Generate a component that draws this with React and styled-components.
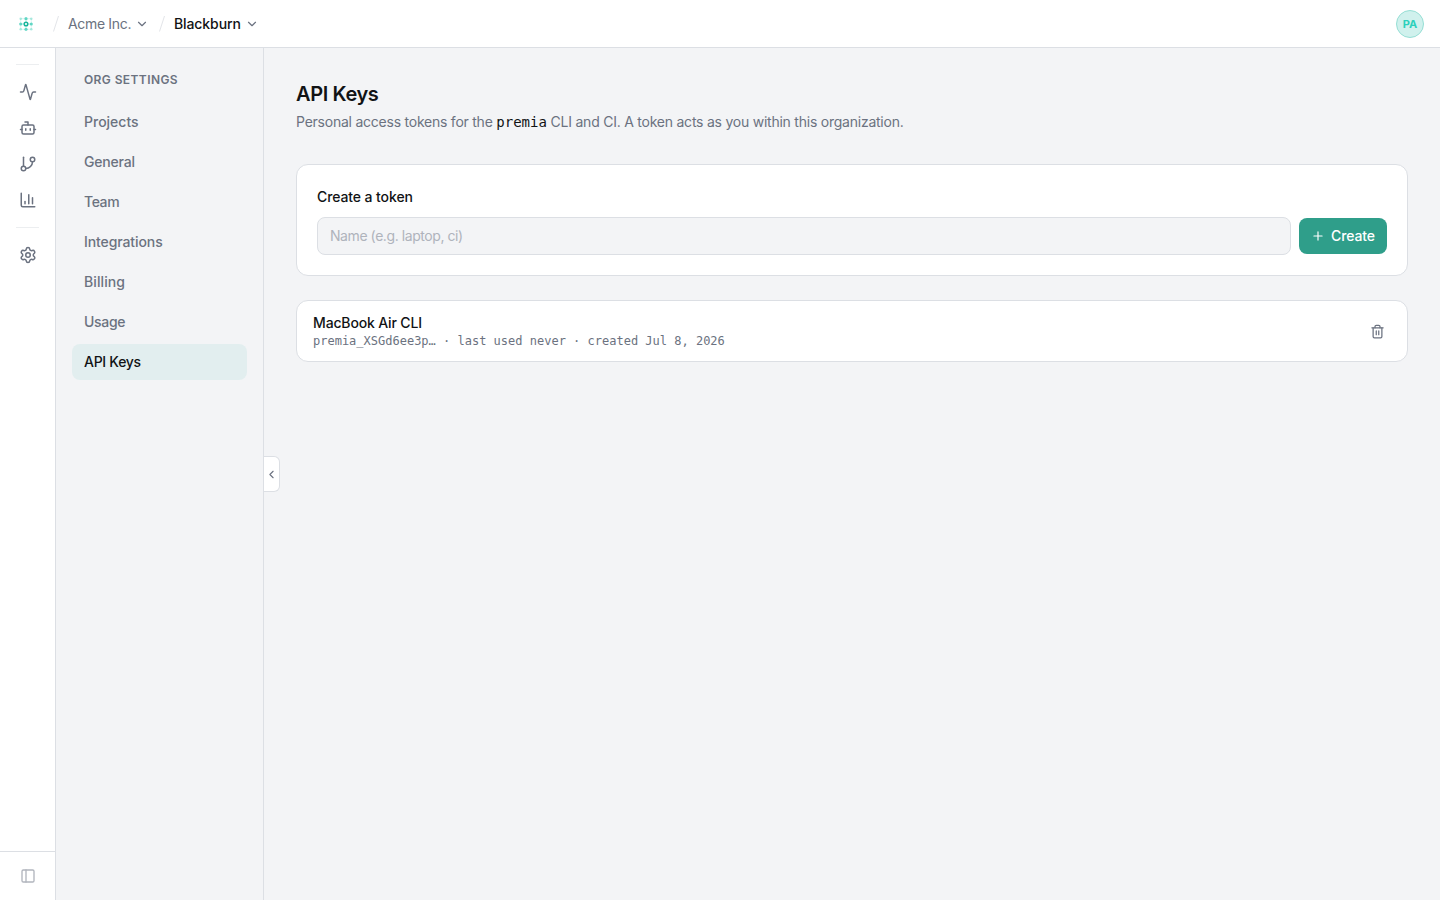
import styled, { createGlobalStyle } from "styled-components";
import {
  Activity,
  Bot,
  ChartColumn,
  ChevronDown,
  ChevronLeft,
  PanelLeft,
  Plus,
  Settings,
  Trash2,
} from "lucide-react";

const GlobalStyle = createGlobalStyle`
  * {
    box-sizing: border-box;
  }

  body {
    margin: 0;
    background: #f3f4f6;
    color: #111315;
    font-family: Inter, "Liberation Sans", sans-serif;
    font-size: 14px;
    line-height: 20px;
    -webkit-font-smoothing: antialiased;
  }

  button, input {
    font: inherit;
    letter-spacing: inherit;
  }

  svg {
    flex-shrink: 0;
  }
`;

const Page = styled.div`
  display: flex;
  flex-direction: column;
  height: 100vh;
`;

const TopBar = styled.header`
  display: flex;
  align-items: center;
  height: 48px;
  flex-shrink: 0;
  padding: 0 16px;
  background: #fff;
  border-bottom: 1px solid #dcdfe4;
`;

const Slash = styled.svg`
  width: 8px;
  height: 18px;
  margin-left: ${(props) => props.$gap}px;
  stroke: #e3e5e9;
`;

const Crumb = styled.button`
  display: flex;
  align-items: center;
  justify-content: space-between;
  width: ${(props) => props.$width}px;
  margin-left: 8px;
  padding: 1px 0 0;
  border: 0;
  background: none;
  white-space: nowrap;
  color: ${(props) => (props.$current ? "#111315" : "#6b7280")};
  font-weight: ${(props) => (props.$current ? 500 : 400)};
  letter-spacing: ${(props) => (props.$current ? -0.1 : -0.33)}px;

  svg {
    color: #6b7280;
  }
`;

const Avatar = styled.div`
  display: flex;
  align-items: center;
  justify-content: center;
  width: 28px;
  height: 28px;
  margin-left: auto;
  border: 1px solid #96dfd5;
  border-radius: 50%;
  background: #d0f1ed;
  color: #2bd0bb;
  font-size: 11px;
  font-weight: 700;
`;

const Body = styled.div`
  display: flex;
  flex: 1;
  min-height: 0;
`;

const Rail = styled.nav`
  display: flex;
  flex-direction: column;
  align-items: center;
  width: 56px;
  flex-shrink: 0;
  padding-top: 16px;
  background: #fff;
  border-right: 1px solid #dcdfe4;
`;

const RailDivider = styled.div`
  width: 23px;
  height: 1px;
  margin: ${(props) => (props.$first ? "0 0 9px" : "9px 0")};
  background: #eceef0;
`;

const RailItem = styled.button`
  display: flex;
  align-items: center;
  justify-content: center;
  width: 36px;
  height: 36px;
  padding: 0;
  border: 0;
  background: none;
  color: #6b7280;
`;

const RailFooter = styled.div`
  display: flex;
  align-items: center;
  justify-content: center;
  width: 100%;
  height: 49px;
  margin-top: auto;
  border-top: 1px solid #dcdfe4;
  color: #b1b5bd;
`;

const Sidebar = styled.aside`
  position: relative;
  width: 208px;
  flex-shrink: 0;
  padding: 24px 16px;
  border-right: 1px solid #dcdfe4;
`;

const SidebarTitle = styled.div`
  padding: 0 12px;
  margin-bottom: 16px;
  line-height: 16px;
  font-size: 12px;
  font-weight: 600;
  letter-spacing: 0.4px;
  color: #6b7280;
`;

const SidebarList = styled.div`
  display: flex;
  flex-direction: column;
  gap: 4px;
`;

const SidebarItem = styled.a`
  padding: 8px 12px;
  border-radius: 8px;
  background: ${(props) => (props.$active ? "#e2eeef" : "transparent")};
  color: ${(props) => (props.$active ? "#111315" : "#6b7280")};
  font-weight: 500;
  letter-spacing: ${(props) => props.$tracking || 0}px;
`;

// Sits on the sidebar edge, over the main area
const CollapseTab = styled.button`
  position: absolute;
  top: 408px;
  right: -17px;
  display: flex;
  align-items: center;
  justify-content: center;
  width: 16px;
  height: 36px;
  padding: 0;
  border: 1px solid #dcdfe4;
  border-left: 0;
  border-radius: 0 6px 6px 0;
  background: #fff;
  color: #6b7280;
`;

const Main = styled.main`
  flex: 1;
  padding: 32px;
`;

const Title = styled.h1`
  margin: 0 0 4px;
  font-size: 20px;
  line-height: 28px;
  font-weight: 600;
  letter-spacing: -0.38px;
`;

const Description = styled.p`
  margin: 0 0 32px;
  color: #6b7280;
  letter-spacing: -0.235px;

  code {
    font-family: "DejaVu Sans Mono", monospace;
    letter-spacing: 0;
    color: #111315;
  }
`;

const Card = styled.section`
  border: 1px solid #dcdfe4;
  border-radius: 12px;
  background: #fff;
`;

const CreateCard = styled(Card)`
  padding: 20px;
  margin-bottom: 24px;
`;

const Label = styled.label`
  display: block;
  margin-bottom: 8px;
  line-height: 24px;
  font-weight: 500;
  letter-spacing: -0.1px;
`;

const FormRow = styled.div`
  display: flex;
  align-items: center;
  gap: 8px;
`;

const NameInput = styled.input`
  flex: 1;
  height: 38px;
  padding: 0 12px 1px;
  border: 1px solid #dcdfe4;
  border-radius: 8px;
  background: #f3f4f6;
  letter-spacing: -0.43px;

  &::placeholder {
    color: #afb3bc;
  }
`;

const CreateButton = styled.button`
  display: flex;
  align-items: center;
  justify-content: space-between;
  width: 88px;
  height: 36px;
  padding: 0 12px;
  border: 0;
  border-radius: 8px;
  background: #2f9e8a;
  color: #fff;
  font-weight: 500;
  letter-spacing: -0.1px;
`;

const TokenCard = styled(Card)`
  display: flex;
  align-items: center;
  justify-content: space-between;
  padding: 12px 16px;
`;

const TokenName = styled.div`
  font-weight: 500;
  letter-spacing: -0.15px;
`;

const TokenMeta = styled.div`
  font-family: "DejaVu Sans Mono", monospace;
  font-size: 12px;
  line-height: 16px;
  color: #6b7280;
`;

const IconButton = styled.button`
  display: flex;
  align-items: center;
  justify-content: center;
  width: 27px;
  height: 28px;
  padding: 0;
  border: 0;
  background: none;
  color: #6b7280;
`;

const Logo = () => (
  <svg width="20" height="20" viewBox="0 0 20 20" fill="#2cc9b0">
    <rect x="4.7" y="4.7" width="10.6" height="10.6" fill="none" stroke="#2cc9b0" strokeOpacity="0.18" />
    <path d="M10 4.7v10.6M4.7 10h10.6" stroke="#2cc9b0" strokeOpacity="0.25" />
    {[4.7, 15.3].map((x) =>
      [4.7, 15.3].map((y) => (
        <circle key={`${x}-${y}`} cx={x} cy={y} r="1.3" fillOpacity="0.35" />
      ))
    )}
    <circle cx="10" cy="4.7" r="1.6" fillOpacity="0.7" />
    <circle cx="10" cy="15.3" r="1.6" fillOpacity="0.7" />
    <circle cx="4.7" cy="10" r="1.6" fillOpacity="0.7" />
    <circle cx="15.3" cy="10" r="1.6" fillOpacity="0.7" />
    <circle cx="10" cy="10" r="1.8" fill="#fff" stroke="#17b59b" strokeWidth="1.5" />
  </svg>
);

const BranchIcon = () => (
  <svg
    width="18"
    height="18"
    viewBox="0 0 24 24"
    fill="none"
    stroke="currentColor"
    strokeWidth="2"
    strokeLinecap="round"
    strokeLinejoin="round"
  >
    <path d="M6 3v12" />
    <circle cx="18" cy="6" r="3" />
    <circle cx="6" cy="18" r="3" />
    <path d="M18 9a9 9 0 0 1-9 9" />
  </svg>
);

const links = [
  { name: "Projects" },
  { name: "General", tracking: -0.18 },
  { name: "Team", tracking: -0.4 },
  { name: "Integrations", tracking: -0.1 },
  { name: "Billing", tracking: 0.1 },
  { name: "Usage", tracking: -0.3 },
  { name: "API Keys", tracking: -0.28, active: true },
];

const App = () => (
  <Page>
    <GlobalStyle />
    <TopBar>
      <Logo />
      <Slash $gap={16} viewBox="0 0 8 18">
        <path d="M1.5 16.5L6.5 1" />
      </Slash>
      <Crumb $width={80.5}>
        Acme Inc.
        <ChevronDown size={14} />
      </Crumb>
      <Slash $gap={9.5} viewBox="0 0 8 18">
        <path d="M1.5 16.5L6.5 1" />
      </Slash>
      <Crumb $current $width={84.5}>
        Blackburn
        <ChevronDown size={14} />
      </Crumb>
      <Avatar>PA</Avatar>
    </TopBar>

    <Body>
      <Rail>
        <RailDivider $first />
        <RailItem>
          <Activity size={18} />
        </RailItem>
        <RailItem>
          <Bot size={18} />
        </RailItem>
        <RailItem>
          <BranchIcon />
        </RailItem>
        <RailItem>
          <ChartColumn size={18} />
        </RailItem>
        <RailDivider />
        <RailItem>
          <Settings size={18} />
        </RailItem>
        <RailFooter>
          <PanelLeft size={16} />
        </RailFooter>
      </Rail>

      <Sidebar>
        <SidebarTitle>ORG SETTINGS</SidebarTitle>
        <SidebarList>
          {links.map((link) => (
            <SidebarItem
              key={link.name}
              $active={link.active}
              $tracking={link.tracking}
            >
              {link.name}
            </SidebarItem>
          ))}
        </SidebarList>
        <CollapseTab>
          <ChevronLeft size={13} />
        </CollapseTab>
      </Sidebar>

      <Main>
        <Title>API Keys</Title>
        <Description>
          Personal access tokens for the <code>premia</code> CLI and CI. A token
          acts as you within this organization.
        </Description>

        <CreateCard>
          <Label htmlFor="token-name">Create a token</Label>
          <FormRow>
            <NameInput id="token-name" placeholder="Name (e.g. laptop, ci)" />
            <CreateButton>
              <Plus size={14} />
              Create
            </CreateButton>
          </FormRow>
        </CreateCard>

        <TokenCard>
          <div>
            <TokenName>MacBook Air CLI</TokenName>
            <TokenMeta>
              premia_XSGd6ee3p… · last used never · created Jul 8, 2026
            </TokenMeta>
          </div>
          <IconButton>
            <Trash2 size={15} />
          </IconButton>
        </TokenCard>
      </Main>
    </Body>
  </Page>
);

export default App;
